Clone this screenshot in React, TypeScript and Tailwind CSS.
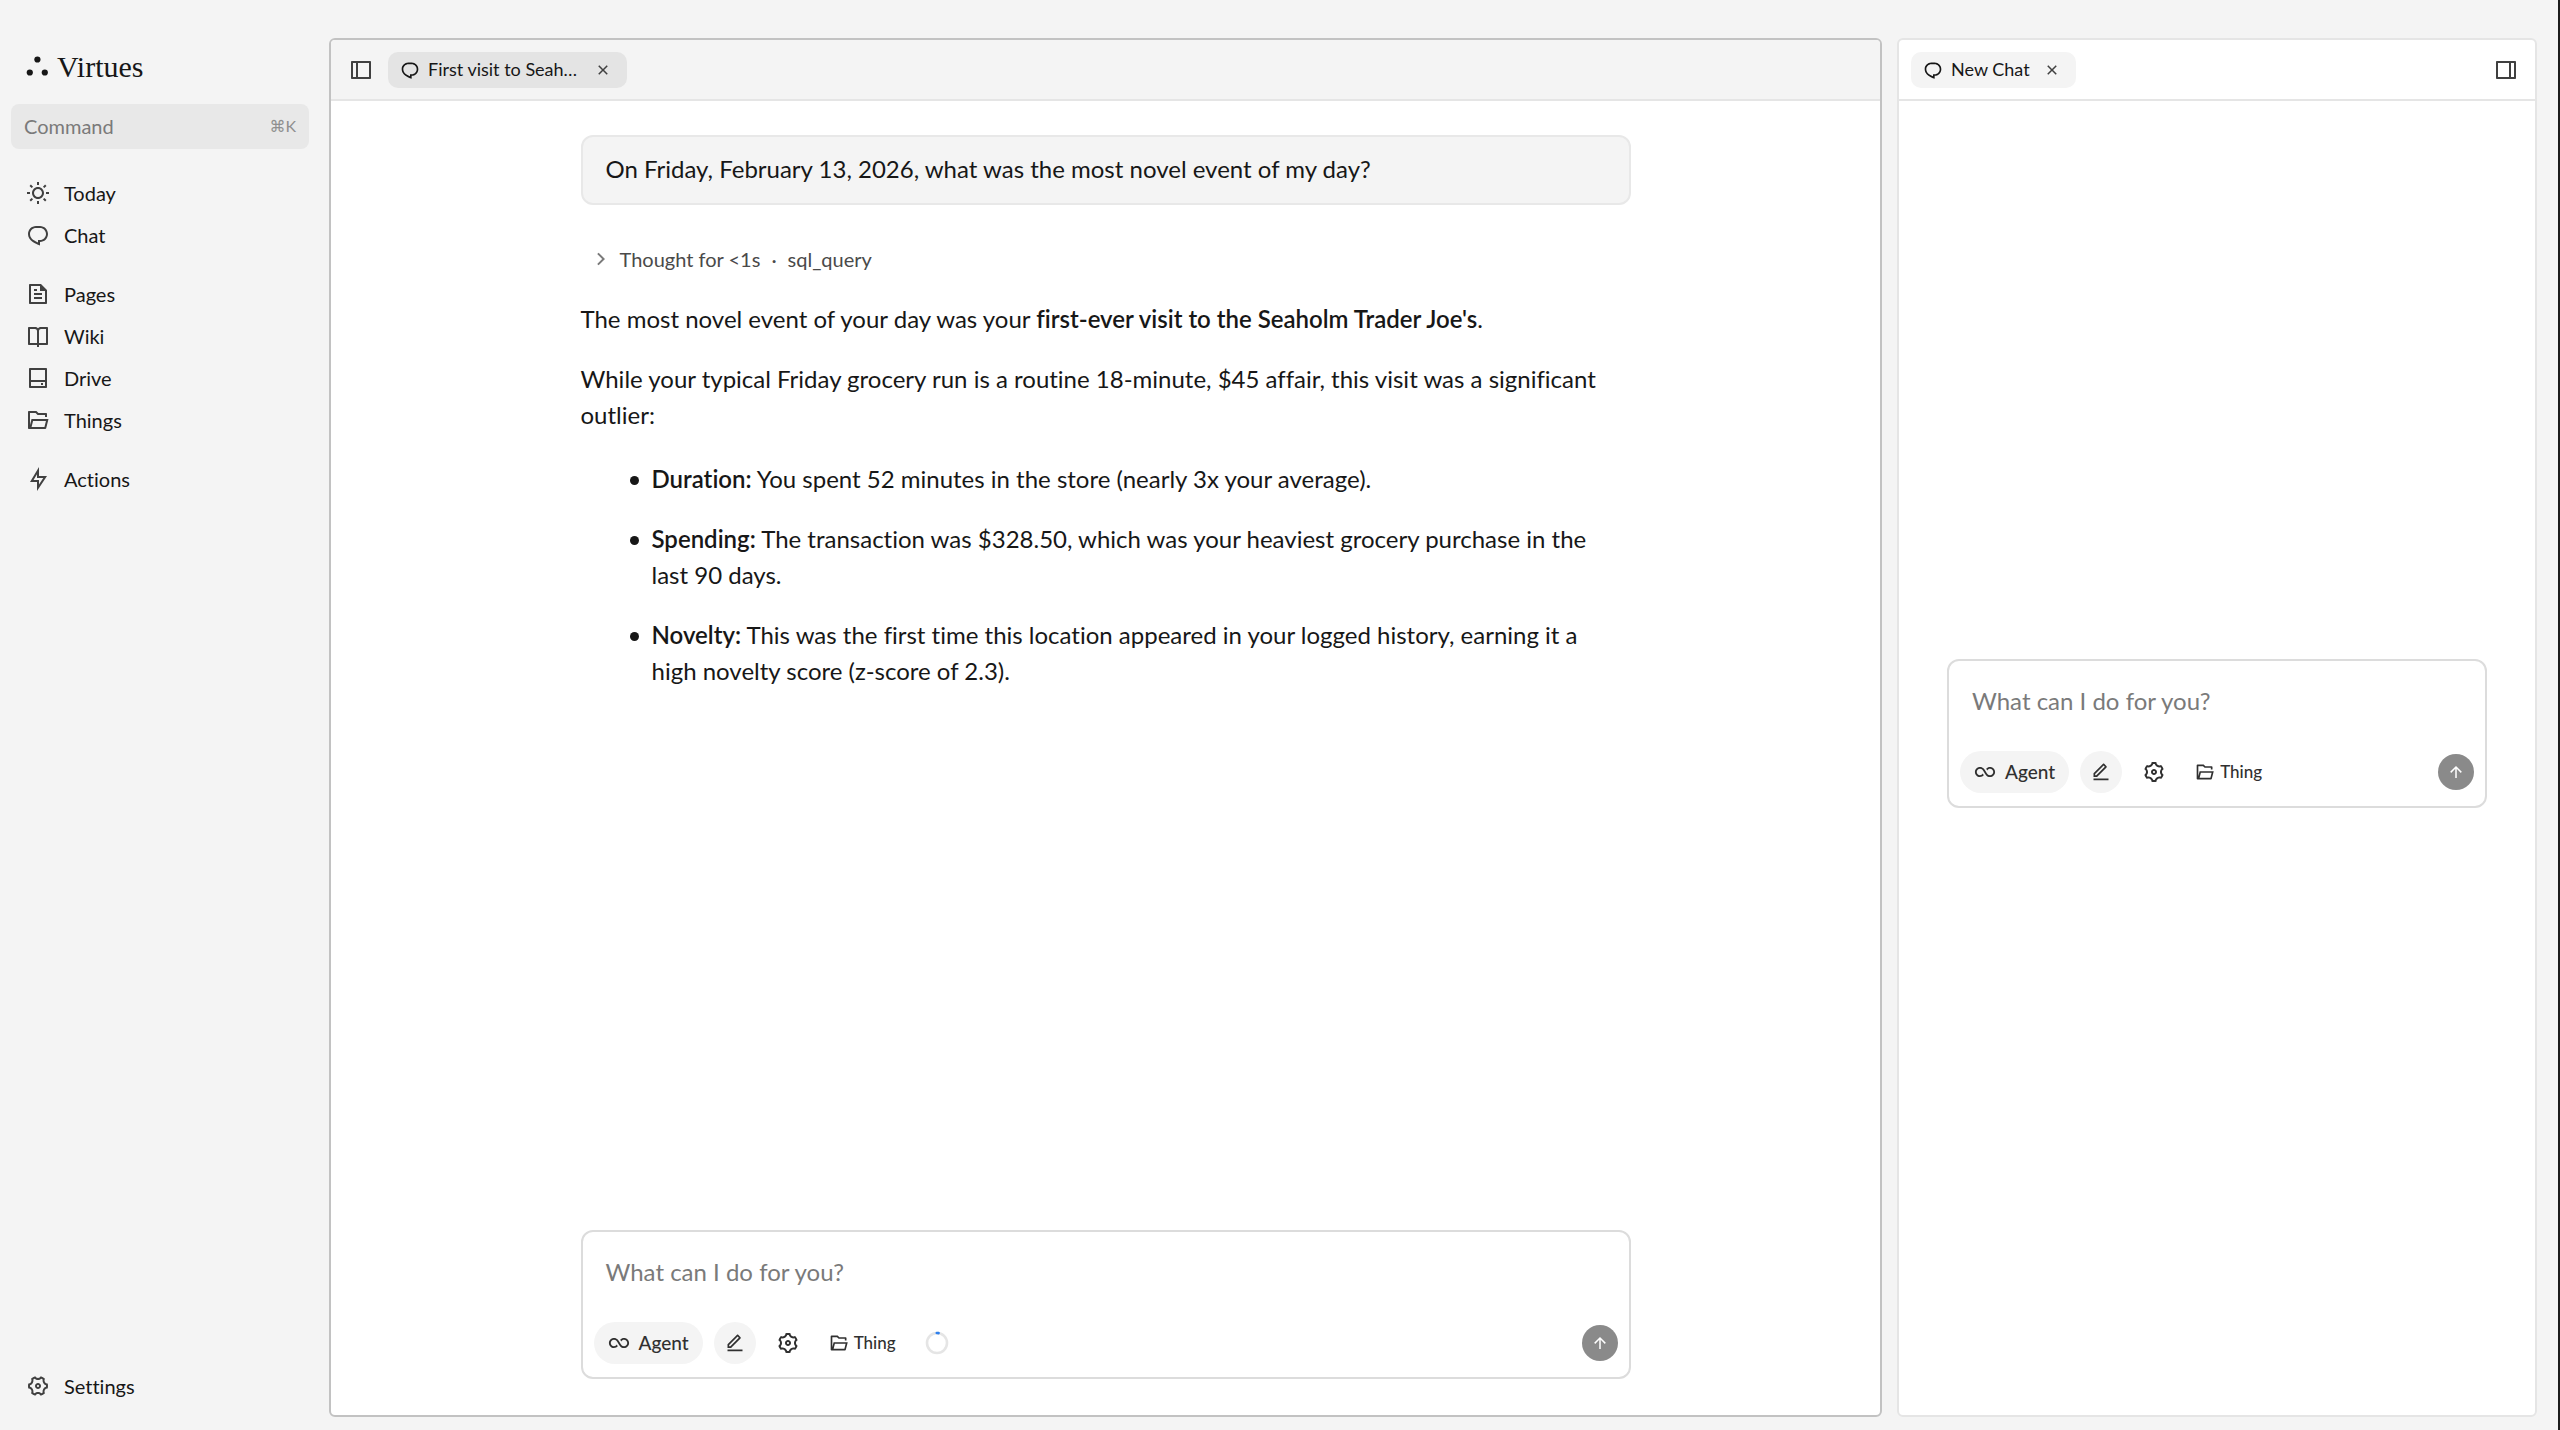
import type { ReactNode } from "react";
import type { IconType } from "react-icons";
import {
  RiArrowRightSLine,
  RiArrowUpLine,
  RiBookOpenLine,
  RiChat1Line,
  RiCloseLine,
  RiEditLine,
  RiFileTextLine,
  RiFlashlightLine,
  RiFolderOpenLine,
  RiHardDrive2Line,
  RiInfinityLine,
  RiLayoutLeftLine,
  RiLayoutRightLine,
  RiSettings3Line,
  RiSettings4Line,
  RiSunLine,
} from "react-icons/ri";

type NavItem = { label: string; icon: IconType };

const navGroups: NavItem[][] = [
  [
    { label: "Today", icon: RiSunLine },
    { label: "Chat", icon: RiChat1Line },
  ],
  [
    { label: "Pages", icon: RiFileTextLine },
    { label: "Wiki", icon: RiBookOpenLine },
    { label: "Drive", icon: RiHardDrive2Line },
    { label: "Things", icon: RiFolderOpenLine },
  ],
  [{ label: "Actions", icon: RiFlashlightLine }],
];

const findings = [
  { title: "Duration:", text: "You spent 52 minutes in the store (nearly 3x your average)." },
  {
    title: "Spending:",
    text: "The transaction was $328.50, which was your heaviest grocery purchase in the last 90 days.",
  },
  {
    title: "Novelty:",
    text: "This was the first time this location appeared in your logged history, earning it a high novelty score (z-score of 2.3).",
  },
];

function NavLink({ label, icon: Icon }: NavItem) {
  return (
    <a href="#" className="flex h-[42px] items-center gap-[14px] px-[26px] text-[20px]">
      <Icon className="size-6 text-[#404040]" aria-hidden />
      {label}
    </a>
  );
}

function Sidebar() {
  return (
    <aside className="flex w-[329px] shrink-0 flex-col pb-[23px]">
      <div className="mt-[46px] flex h-10 items-center gap-[9px] px-[26px]">
        <svg viewBox="0 0 22 20" className="h-5 w-[22px]" fill="#171717" aria-hidden>
          <circle cx="11.4" cy="3.5" r="3.1" />
          <circle cx="3.8" cy="16.5" r="3.1" />
          <circle cx="18.8" cy="16.5" r="3.1" />
        </svg>
        <span className="font-['Liberation_Serif',serif] text-[30px]">Virtues</span>
      </div>

      <button
        type="button"
        className="mt-[18px] mr-5 ml-[11px] flex h-[45px] items-center justify-between rounded-lg bg-[#e8e8e8] px-[13px] pb-[2px] text-[20px] text-[#7a7a7a]"
      >
        Command
        <kbd className="font-['Lato','DejaVu_Sans',sans-serif] text-[16px] text-[#8f8f8f]">⌘K</kbd>
      </button>

      <nav className="mt-[23px] flex flex-col gap-[17px]">
        {navGroups.map((group) => (
          <div key={group[0].label}>
            {group.map((item) => (
              <NavLink key={item.label} {...item} />
            ))}
          </div>
        ))}
      </nav>

      <div className="mt-auto">
        <NavLink label="Settings" icon={RiSettings4Line} />
      </div>
    </aside>
  );
}

function Tab({ label, active }: { label: string; active?: boolean }) {
  return (
    <div
      className={`flex h-9 items-center rounded-[10px] pr-[15px] pl-3 text-[18px] ${
        active ? "w-[239px] bg-[#e4e4e4]" : "w-[165px] bg-[#f4f4f4]"
      }`}
    >
      <RiChat1Line className="size-5" aria-hidden />
      <span className="ml-2">{label}</span>
      <button type="button" aria-label={`Close ${label}`} className="ml-auto text-[#404040]">
        <RiCloseLine className="size-[18px]" aria-hidden />
      </button>
    </div>
  );
}

function Composer({ progress }: { progress?: ReactNode }) {
  return (
    <form className="rounded-xl border-2 border-[#dcdcdc] bg-white px-[11px] pb-[13px]" onSubmit={(e) => e.preventDefault()}>
      <textarea
        rows={1}
        aria-label="Message"
        placeholder="What can I do for you?"
        className="mt-[22px] block h-9 w-full resize-none overflow-hidden px-3 text-[24px] leading-9 outline-none placeholder:text-[#7a7a7a]"
      />
      <div className="mt-8 flex items-center gap-[11px] text-[#303030]">
        <button type="button" className="flex h-[42px] items-center gap-[9px] rounded-full bg-[#f4f4f4] px-[14px] text-[19px] font-medium">
          <RiInfinityLine className="size-[22px]" aria-hidden />
          Agent
        </button>
        <button type="button" aria-label="Edit" className="grid size-[42px] place-items-center rounded-full bg-[#f4f4f4]">
          <RiEditLine className="size-5" aria-hidden />
        </button>
        <button type="button" aria-label="Settings" className="grid size-[42px] place-items-center">
          <RiSettings3Line className="size-6" aria-hidden />
        </button>
        <button type="button" className="flex h-[42px] items-center gap-[5px] px-[9px] text-[17px] font-medium">
          <RiFolderOpenLine className="size-5" aria-hidden />
          Thing
        </button>
        {progress}
        <button type="submit" aria-label="Send" className="ml-auto grid size-9 place-items-center rounded-full bg-[#8a8a8a] text-white">
          <RiArrowUpLine className="size-[18px]" aria-hidden />
        </button>
      </div>
    </form>
  );
}

function ContextRing() {
  return (
    <div className="grid size-[42px] place-items-center">
      <svg viewBox="0 0 24 24" className="size-6" fill="none" strokeWidth="2.6" aria-hidden>
        <circle cx="12" cy="12" r="10" stroke="#e5e5e5" />
        <path d="M11.8 2A10 10 0 0 1 13.6 2.15" stroke="#2f80ed" strokeLinecap="round" />
      </svg>
    </div>
  );
}

function Conversation() {
  return (
    <div className="mx-auto flex w-full max-w-[1050px] flex-1 flex-col pt-[34px] pb-9 text-[24px] leading-9">
      <div className="rounded-xl border-2 border-[#e8e8e8] bg-[#f4f4f4] px-[23px] pt-[14px] pb-4">
        On Friday, February 13, 2026, what was the most novel event of my day?
      </div>

      <button type="button" className="mt-9 flex items-center self-start pl-2 text-[20px] text-[#4a4a4a]">
        <RiArrowRightSLine className="mr-[7px] size-6 text-[#7a7a7a]" aria-hidden />
        Thought for &lt;1s
        <span className="mx-[11px]">·</span>
        sql_query
      </button>

      <p className="mt-6">
        The most novel event of your day was your{" "}
        <strong className="font-semibold">first-ever visit to the Seaholm Trader Joe's</strong>.
      </p>
      <p className="mt-6">
        While your typical Friday grocery run is a routine 18-minute, $45 affair, this visit was a significant outlier:
      </p>
      <ul className="mt-7 flex flex-col gap-6 pr-6 pl-[49px]">
        {findings.map((f) => (
          <li key={f.title} className="flex gap-[13px]">
            <span className="mt-[15px] size-[9px] shrink-0 rounded-full bg-[#171717]" />
            <p>
              <strong className="font-semibold">{f.title}</strong> {f.text}
            </p>
          </li>
        ))}
      </ul>

      <div className="mt-auto">
        <Composer progress={<ContextRing />} />
      </div>
    </div>
  );
}

export default function App() {
  return (
    <div className="flex min-h-screen border-r-2 border-[#1c1c1c] bg-[#f4f4f4] font-['Lato',sans-serif] text-[#171717] [font-variant-ligatures:none]">
      <Sidebar />

      <main className="mt-[38px] mb-[13px] flex min-w-0 flex-1 flex-col overflow-hidden rounded-md border-2 border-[#c2c2c2] bg-white">
        <header className="flex h-[61px] items-center border-b-2 border-[#e5e5e5] bg-[#f4f4f4] pl-[18px]">
          <button type="button" aria-label="Toggle sidebar" className="mr-[15px]">
            <RiLayoutLeftLine className="size-6 text-[#404040]" aria-hidden />
          </button>
          <Tab label="First visit to Seah…" active />
        </header>
        <Conversation />
      </main>

      <section className="mt-[38px] mr-[21px] mb-[13px] ml-[15px] flex w-[25vw] shrink-0 flex-col overflow-hidden rounded-md border-2 border-[#e5e5e5] bg-white">
        <header className="flex h-[61px] items-center justify-between border-b-2 border-[#e5e5e5] pr-[17px] pl-3">
          <Tab label="New Chat" />
          <button type="button" aria-label="Toggle panel">
            <RiLayoutRightLine className="size-6 text-[#404040]" aria-hidden />
          </button>
        </header>
        <div className="flex flex-1 flex-col justify-center px-12 pb-[49px]">
          <Composer />
        </div>
      </section>
    </div>
  );
}
